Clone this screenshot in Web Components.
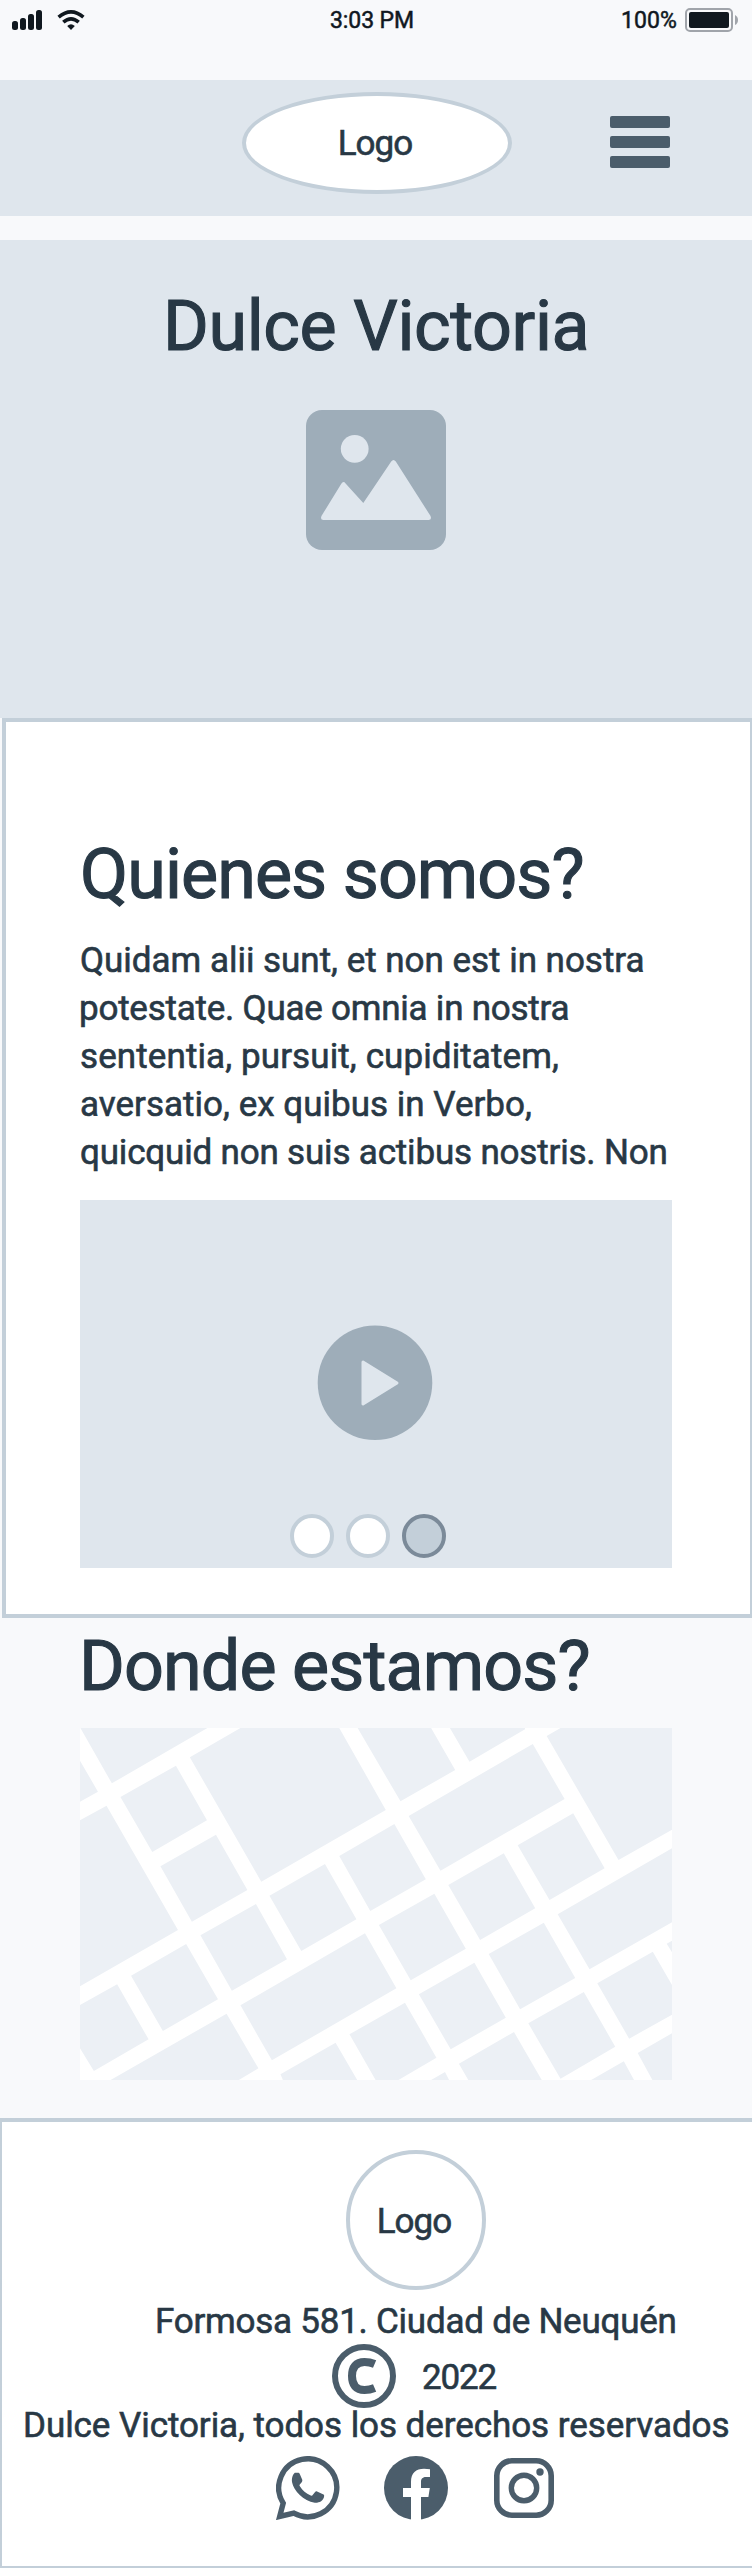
<!DOCTYPE html>
<html lang="es">
<head>
<meta charset="utf-8">
<title>Dulce Victoria</title>
<style>
html,body{margin:0;padding:0}
body{width:752px;background:#f8f9fb;color:#283845;font-family:Roboto,"Liberation Sans",sans-serif}
</style>
</head>
<body>
<dv-page></dv-page>
<script>
const define = (name, markup, setup) => customElements.define(name, class extends HTMLElement {
  connectedCallback() {
    if (this.shadowRoot) return;
    const t = document.createElement('template');
    t.innerHTML = markup;
    this.attachShadow({mode: 'open'}).append(t.content.cloneNode(true));
    if (setup) setup(this);
  }
});
const pen = document.createElement('canvas').getContext('2d');

// One line of text whose letter spacing is adjusted to fill the "ink" width.
define('fit-line', `<style>
  :host{display:block;flex:none;white-space:nowrap;font-size:35px;line-height:48px;font-weight:400;-webkit-text-stroke:.6px currentColor}
  :host([size=title]){font-size:70px;line-height:80px;-webkit-text-stroke-width:1.1px}
  :host([size=status]){font-size:23px;line-height:32px;-webkit-text-stroke-width:.5px}
  span{display:block}
  </style><span><slot></slot></span>`, el => {
  const cs = getComputedStyle(el), text = el.textContent, ink = +el.getAttribute('ink');
  pen.font = `${cs.fontWeight} ${cs.fontSize} Roboto`;
  const m = pen.measureText(text);
  const natural = m.actualBoundingBoxLeft + m.actualBoundingBoxRight;
  el.style.width = ink + 'px';
  el.style.letterSpacing = ((ink - natural) / (text.length - 1)).toFixed(3) + 'px';
  el.shadowRoot.querySelector('span').style.marginLeft = m.actualBoundingBoxLeft + 'px';
});

define('status-bar', `<style>
  :host{display:flex;height:80px;align-items:flex-start;color:#10181f;box-sizing:border-box}
  .signal{margin:10px 0 0 12px}.wifi{margin:10px 0 0 15px}
  .time{margin:5px 0 0 245px}.pct{margin:5px 0 0 209px}.bat{margin:8px 0 0 9px}
  svg{display:block;flex:none}
  </style>
  <svg class="signal" width="30" height="20" fill="#10181f"><rect y="11" width="6" height="9" rx="2.5"/><rect x="8" y="8" width="6" height="12" rx="2.5"/><rect x="16" y="4" width="6" height="16" rx="2.5"/><rect x="24" width="6" height="20" rx="2.5"/></svg>
  <svg class="wifi" width="29" height="20" fill="none" stroke="#10181f" stroke-width="3.6"><path d="M1.6 7.2Q14 -3.4 26.4 7.2"/><path d="M6.3 12.2Q14 5.6 21.7 12.2"/><path d="M10.2 16Q14 12.6 17.8 16L14 20Z" fill="#10181f" stroke="none"/></svg>
  <fit-line class="time" size="status" ink="82">3:03 PM</fit-line>
  <fit-line class="pct" size="status" ink="54">100%</fit-line>
  <svg class="bat" width="54" height="24"><rect x="1" y="1" width="46" height="22" rx="4" fill="none" stroke="#a0a4aa" stroke-width="2"/><rect x="4" y="4" width="40" height="16" rx="2" fill="#10181f"/><path d="M50 7Q53 8.5 53 12T50 17Z" fill="#a0a4aa"/></svg>`);

define('logo-badge', `<style>
  :host{display:flex;flex:none;justify-content:center;box-sizing:border-box;width:140px;height:140px;border:4px solid #c3cfd9;border-radius:50%;background:#fff;padding-top:44px}
  :host([wide]){width:270px;height:102px;padding-top:24px}
  fit-line{margin-left:-2px}
  </style><fit-line ink="72.5">Logo</fit-line>`);

define('menu-button', `<style>:host{display:flex;flex-direction:column;gap:8px;width:60px}i{height:12px;border-radius:2px;background:#4b5d6b}</style><i></i><i></i><i></i>`);

define('top-bar', `<style>
  :host{display:flex;align-items:flex-start;height:136px;background:#dfe6ed;margin-bottom:24px}
  logo-badge{margin:12px 0 0 242px}menu-button{margin:36px 0 0 98px}
  </style><logo-badge wide></logo-badge><menu-button></menu-button>`);

define('hero-banner', `<style>
  :host{display:flex;flex-direction:column;height:478px;background:#dfe6ed;padding-top:46px;box-sizing:border-box}
  fit-line{margin-left:168px}svg{display:block;margin:44px 0 0 306px}
  </style><fit-line size="title" ink="418.5">Dulce Victoria</fit-line>
  <svg width="140" height="140"><rect width="140" height="140" rx="16" fill="#9eadb9"/><g fill="#dfe6ed"><circle cx="48.7" cy="38.8" r="13.9"/><path d="M17.5 110Q13.8 109.5 15.6 105.8L35.3 73.7Q37.3 70.7 39.6 73.4L57.3 93L85.2 51.6Q87.5 48.5 89.8 51.6L124.4 105.8Q126.2 109.5 122.5 110Z"/></g></svg>`);

define('media-box', `<style>
  :host{display:flex;flex-direction:column;width:592px;height:368px;background:#dfe6ed}
  svg{display:block;margin:125px 0 0 237px}
  .dots{display:flex;gap:12px;margin:73px 0 0 210px}
  .dots i{box-sizing:border-box;width:44px;height:44px;border:4px solid #c3cfd9;border-radius:50%;background:#fff}
  .dots i.on{background:#c3cfd9;border-color:#7b8a99}
  </style><svg width="116" height="116"><circle cx="58" cy="57.8" r="57.3" fill="#9eadb9"/><path d="M46 37L80 58L46 79Z" fill="#dfe6ed" stroke="#dfe6ed" stroke-width="3" stroke-linejoin="round"/></svg>
  <div class="dots"><i></i><i></i><i class="on"></i></div>`);

define('about-card', `<style>
  :host{display:block;box-sizing:border-box;width:750px;height:900px;margin-left:2px;border:solid #c3cfd9;border-width:4px 2px 4px 4px;background:#fff;padding:112px 0 0 74px}
  .h{margin:0 0 23px 3px}
  .p{margin-left:1px;height:263px}
  </style><fit-line class="h" size="title" ink="499.5">Quienes somos?</fit-line>
  <div class="p">
  <fit-line ink="562.5">Quidam alii sunt, et non est in nostra</fit-line>
  <fit-line ink="487.5">potestate. Quae omnia in nostra</fit-line>
  <fit-line ink="477">sententia, pursuit, cupiditatem,</fit-line>
  <fit-line ink="450">aversatio, ex quibus in Verbo,</fit-line>
  <fit-line ink="584.5">quicquid non suis actibus nostris. Non</fit-line></div>
  <media-box></media-box>`);

define('street-map', `<style>:host{display:block;width:592px;height:352px}svg{display:block}</style>
  <svg width="592" height="352" viewBox="49 324 1450 1056" preserveAspectRatio="none"><path fill="#fff" d="M49 324H1499V1380H49Z"/>
  <path fill="#ecf0f5" d="M50 324H361L127 490ZM49 422L93 515L49 545ZM148 531L284 437L360 601L226 696ZM318 412L442 324H684L798 570L493 785ZM729 324H909L968 450L834 544ZM955 324H1139V328L1003 425ZM1192 348L1226 324H1499V629L1368 720ZM246 739L382 644L459 810L323 905ZM49 601L114 557L289 930L49 1099ZM344 946L480 852L556 1018L421 1112ZM513 827L649 732L726 898L591 993ZM684 708L819 612L896 778L760 873ZM854 588L1158 372L1236 537L932 752ZM951 795L1087 700L1164 865L1029 960ZM1121 676L1257 580L1334 745L1199 840ZM1219 883L1499 685V907L1297 1048ZM781 915L917 821L994 986L859 1081ZM1050 1002L1185 908L1262 1074L1127 1168ZM442 1156L747 940L824 1105L519 1321ZM174 1067L309 972L387 1138L252 1233ZM49 1155L140 1093L217 1258L83 1353L49 1285ZM124 1380L408 1181L486 1345L438 1380ZM540 1363L675 1268L728 1380H546ZM709 1243L845 1148L922 1313L829 1380H773ZM879 1123L1015 1028L1092 1193L957 1288ZM909 1380L943 1356L953 1380ZM977 1331L1112 1236L1180 1380H1000ZM1147 1210L1283 1116L1360 1280L1226 1376ZM1316 1090L1452 995L1499 1095V1184L1394 1256ZM1486 971L1499 962V997ZM1415 1299L1499 1240V1380H1451ZM1301 1380L1381 1324L1406 1380Z"/></svg>`);

define('location-block', `<style>
  :host{display:block;height:500px;box-sizing:border-box;padding:8px 0 0 80px}
  fit-line{margin:0 0 22px 4px}
  </style><fit-line size="title" ink="504.5">Donde estamos?</fit-line><street-map></street-map>`);

define('page-footer', `<style>
  :host{display:flex;flex-direction:column;box-sizing:border-box;height:450px;background:#fff;border:solid #c3cfd9;border-width:4px 0 2px 2px;padding-top:28px}
  logo-badge{margin-left:344px}
  .addr{margin:8px 0 0 155px}
  .year{display:flex;height:66px;margin:-2px 0 0 330px}
  .year fit-line{margin:10px 0 0 27px}
  .rights{margin:-8px 0 0 23px}
  .social{display:flex;margin:6px 0 0 274px;gap:44px}
  svg{display:block;flex:none}
  </style><logo-badge></logo-badge>
  <fit-line class="addr" ink="517.5">Formosa 581. Ciudad de Neuquén</fit-line>
  <div class="year"><svg width="64" height="64" fill="none" stroke="#4b5d6b"><circle cx="32" cy="32" r="29" stroke-width="6"/><path d="M42.6 20C38 18 35 17.9 32.5 17.9C24 17.9 20 23 20 32S24 46.1 32.5 46.1C35 46.1 38 46 42.6 44" stroke-width="8"/></svg><fit-line ink="73.5">2022</fit-line></div>
  <fit-line class="rights" ink="703.5">Dulce Victoria, todos los derechos reservados</fit-line>
  <div class="social">
  <svg width="64" height="64" fill="#4b5d6b"><path d="M3.7 60.5L7.2 47.2A29 29 0 1 1 17.8 57.2Z" fill="none" stroke="#4b5d6b" stroke-width="5.4"/><path d="M19 17.2H22.5C23.7 17.2 24.2 17.8 24.6 18.8L27.2 25.2C27.5 26.2 27.3 27 26.6 27.8L24.5 30.4C24 31 24 31.6 24.4 32.2C27.7 37.5 31.2 40.5 36.5 42.7C37.3 43 37.9 42.9 38.4 42.3L41.3 38.7C41.9 37.9 42.6 37.7 43.5 38.1L50 41.2C51 41.7 51.4 42.1 51.3 43.2C50.6 49 45.5 51 41 50.7C28.5 49 17.7 37.3 16 27.8C15.3 23 17 19 19 17.2Z" transform="translate(1.5 1.3) scale(.91 .895)"/></svg>
  <svg width="64" height="64"><circle cx="32" cy="32" r="32" fill="#4b5d6b"/><path d="M27 64V41H19V32H27V26C27 17 32 12.8 40 12.8Q43 12.8 46 13.3V21H42C38 21 37 23.4 37 26V32H45.8L44.4 41H37V64Z" fill="#fff"/></svg>
  <svg width="64" height="64" fill="none" stroke="#4b5d6b"><rect x="4.8" y="4.8" width="54.4" height="54.4" rx="15" stroke-width="5.6"/><circle cx="32" cy="32" r="12.7" stroke-width="5.4"/><circle cx="48" cy="16" r="3.7" fill="#4b5d6b" stroke="none"/></svg>
  </div>`);

define('dv-page', `<style>:host{display:block;width:752px;height:2568px;overflow:hidden}</style>
  <status-bar></status-bar><top-bar></top-bar><hero-banner></hero-banner><about-card></about-card><location-block></location-block><page-footer></page-footer>`);
</script>
</body>
</html>
